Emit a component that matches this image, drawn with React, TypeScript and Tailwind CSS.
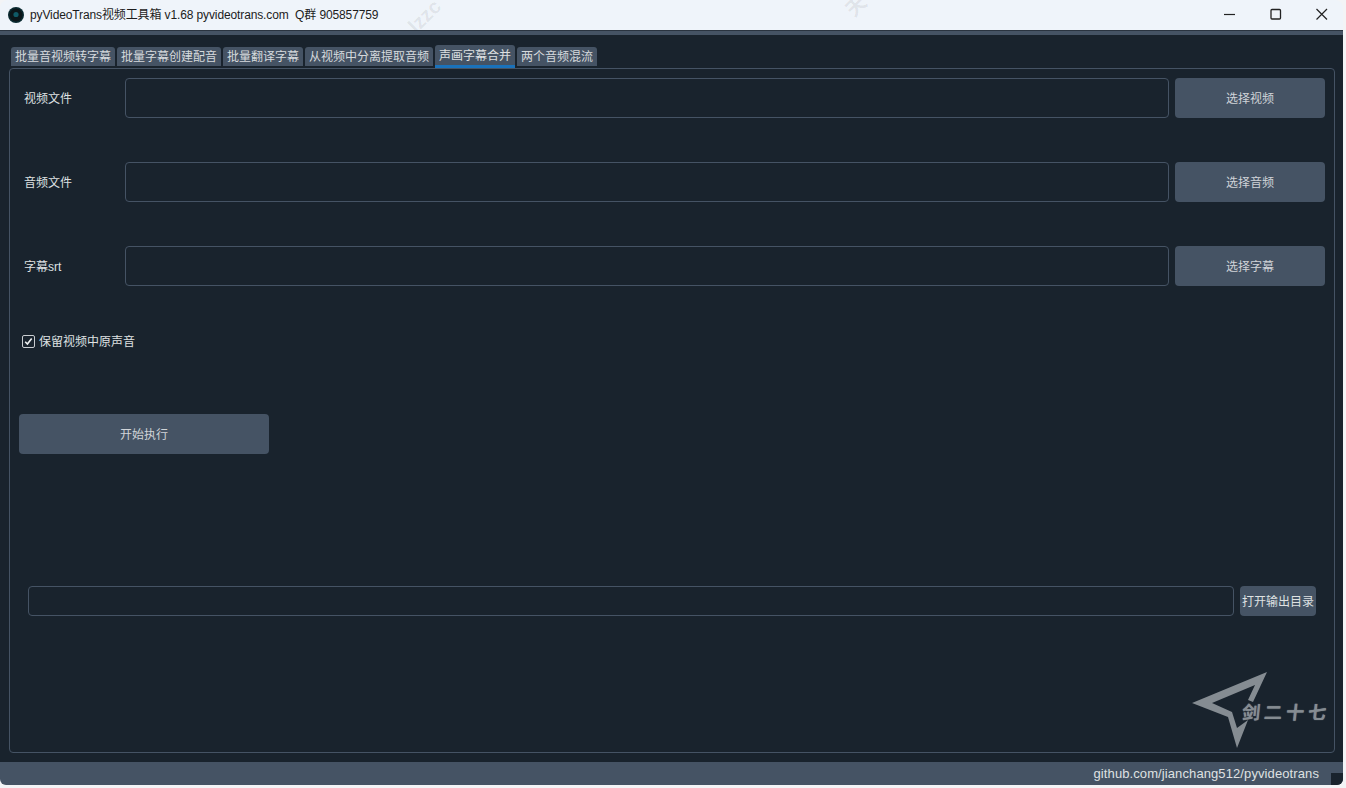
import React from "react";

const tabs = ["批量音视频转字幕", "批量字幕创建配音", "批量翻译字幕", "从视频中分离提取音频", "声画字幕合并", "两个音频混流"];
const rows = [
  ["视频文件", "选择视频"],
  ["音频文件", "选择音频"],
  ["字幕srt", "选择字幕"],
];

export default function App() {
  return (
    <div className="relative h-[788px] w-[1346px] overflow-hidden bg-[#f3f4f6] [font-family:'Liberation_Sans','Noto_Sans_CJK_SC',sans-serif]">
      <div className="flex h-[785px] w-[1343px] flex-col overflow-hidden rounded-t-lg rounded-b-[6px]">
        <div className="relative flex h-[30px] shrink-0 items-center overflow-hidden bg-[#eff4fa] pl-[8px] text-[12px] text-[#1c1c1c]">
          <svg width="16" height="16" viewBox="0 0 16 16" className="shrink-0">
            <circle cx="8" cy="8" r="8" fill="#0a2a30" />
            <circle cx="8" cy="8" r="6.5" fill="#0b1619" />
            <circle cx="8" cy="7.5" r="2.6" fill="#0f5a66" />
          </svg>
          <span className="ml-[6px] whitespace-pre tracking-[-0.12px]">pyVideoTrans视频工具箱 v1.68 pyvideotrans.com  Q群 905857759</span>
          <span className="absolute top-[1px] left-[406px] -rotate-45 whitespace-nowrap text-[20px] font-bold text-black/[0.08]">lzzc</span>
          <span className="absolute top-[-9px] left-[846px] -rotate-45 whitespace-nowrap text-[20px] font-bold text-black/[0.08]">天</span>
          <div className="ml-auto flex h-full items-center">
            <svg width="46" height="30" viewBox="0 0 46 30" className="text-[#222]"><path d="M19 14.5h11" stroke="currentColor" strokeWidth="1.2" /></svg>
            <svg width="46" height="30" viewBox="0 0 46 30" className="text-[#222]"><rect x="20" y="9.5" width="9.5" height="9.5" rx="1" fill="none" stroke="currentColor" strokeWidth="1.3" /></svg>
            <svg width="46" height="30" viewBox="0 0 46 30" className="text-[#222]"><path d="M19.5 9L30 19.5M30 9L19.5 19.5" stroke="currentColor" strokeWidth="1.2" /></svg>
          </div>
        </div>
        <div className="h-[5px] shrink-0 border-t border-[#2a3440] bg-[#455364]" />
        <div className="flex min-h-0 flex-1 flex-col bg-[#19232d] pt-[10px] pr-[8px] pb-[9px] pl-[9px] text-[12px] text-[#dfe1e2]">
          <div className="flex h-[23px] shrink-0 items-start gap-[2px] pl-[2px]">
            {tabs.map((t, i) =>
              i === 4 ? (
                <div key={t} className="flex h-[23px] items-center rounded-t-[3px] border-b-[3px] border-[#1a72bb] bg-[#455364] px-[4px] pt-[1px]">{t}</div>
              ) : (
                <div key={t} className="mt-[2px] flex h-[19px] items-center rounded-t-[3px] bg-[#455364] px-[4px] pt-[1px] text-[#d6dadd]">{t}</div>
              )
            )}
          </div>
          <div className="flex min-h-0 flex-1 flex-col rounded-[4px] border border-[#455364] pt-[9px] pr-[9px] pl-[9px]">
            <div className="flex flex-col gap-[44px]">
              {rows.map(([l, b]) => (
                <div key={l} className="flex h-[40px] items-center">
                  <div className="w-[106px] pt-[2px] pl-[5px]">{l}</div>
                  <div className="h-[40px] min-w-0 flex-1 rounded-[4px] border border-[#455364]" />
                  <button className="ml-[6px] h-[40px] w-[150px] rounded-[4px] bg-[#455364] pt-[2px] text-[#d0d4d8]">{b}</button>
                </div>
              ))}
            </div>
            <label className="mt-[46px] flex h-[18px] items-center pl-[3px]">
              <span className="flex h-[13px] w-[13px] items-center justify-center rounded-[2px] border border-[#c9cdd1]">
                <svg width="9" height="9" viewBox="0 0 9 9"><path d="M1.2 4.8l2.2 2.3 4.3-5.6" fill="none" stroke="#eef0f1" strokeWidth="1.6" /></svg>
              </span>
              <span className="ml-[4px] pt-[2px]">保留视频中原声音</span>
            </label>
            <button className="mt-[64px] h-[40px] w-[250px] rounded-[4px] bg-[#455364] pt-[2px] text-[#d0d4d8]">开始执行</button>
            <div className="mt-[132px] flex h-[30px] items-center pr-[9px] pl-[9px]">
              <div className="h-[30px] min-w-0 flex-1 rounded-[4px] border border-[#455364]" />
              <button className="ml-[6px] h-[30px] w-[76px] whitespace-nowrap rounded-[4px] bg-[#455364] pt-[2px] text-[#dfe1e2]">打开输出目录</button>
            </div>
          </div>
        </div>
        <div className="flex h-[23px] shrink-0 items-center justify-end bg-[#455364] pt-[1px] pr-[24px] text-[13px] tracking-[0.1px] text-[#dfe1e2]">github.com/jianchang512/pyvideotrans</div>
      </div>
      <div className="absolute top-[773px] left-[1331px] h-[12px] w-[12px] rounded-br-[6px] bg-[#19232d]" />
      <span className="absolute top-[458px] left-[715px] -rotate-45 whitespace-nowrap text-[18px] font-bold text-white/[0.025]">天极下载站 www.lzzcom</span>
      <span className="absolute top-[375px] left-[1255px] -rotate-45 whitespace-nowrap text-[18px] font-bold text-white/[0.025]">天极下载站</span>
      <span className="absolute top-[92px] left-[310px] -rotate-45 whitespace-nowrap text-[18px] font-bold text-white/[0.025]">天极下载</span>
      <svg width="80" height="80" viewBox="0 0 80 80" className="absolute top-[670px] left-[1190px]">
        <path d="M2 33L77 2L63 32L58 30L65 15L22 33L42 42L47 58L58 50L47 78L38 47Z" fill="#858c92" />
      </svg>
      <div className="absolute top-[700px] left-[1242px] -skew-x-6 whitespace-nowrap text-[18px] font-bold tracking-[4px] text-[#858c92] [text-shadow:0_0_1px_#858c92]">剑二十七</div>
    </div>
  );
}
